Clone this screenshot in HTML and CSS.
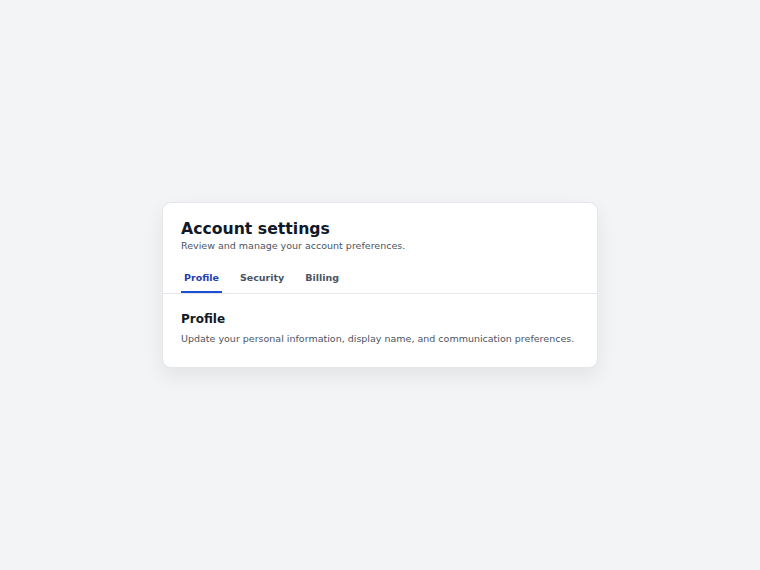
FILE: index.html
```html
<!DOCTYPE html>
<html>
<head>
  <meta charset="UTF-8">
  <title>Account settings</title>
  <link rel="stylesheet" href="styles.css">
</head>
<body>
  <div class="page">
    <div class="card">
      <div class="card-header">
        <h1>Account settings</h1>
        <p class="subtitle">Review and manage your account preferences.</p>
        <nav class="tabs">
          <button class="tab active" type="button">Profile</button>
          <button class="tab" type="button">Security</button>
          <button class="tab" type="button">Billing</button>
        </nav>
      </div>
      <div class="panel">
        <h2>Profile</h2>
        <p>Update your personal information, display name, and communication preferences.</p>
      </div>
    </div>
  </div>
</body>
</html>
```

FILE: styles.css
```css
:root {
  --background: #f3f4f6;
  --text: #111827;
  --muted: #4b5563;
  --primary: #1e40af;
  --border: #e5e7eb;
}

body {
  margin: 0;
  font-family: 'DejaVu Sans', sans-serif;
  background: var(--background);
  color: var(--text);
}

.page {
  min-height: 100vh;
  display: flex;
  align-items: center;
  justify-content: center;
}

.card {
  width: 434px;
  background: white;
  border: 1px solid var(--border);
  border-radius: 9px;
  box-shadow: 0 8px 20px rgba(0, 0, 0, 0.07);
}

.card-header {
  padding: 16px 18px 0;
  border-bottom: 1px solid var(--border);
}

h1 {
  margin: 0;
  font-size: 15.7px;
  line-height: 20px;
}

.subtitle {
  margin: 0;
  font-size: 9.5px;
  line-height: 14px;
  color: var(--muted);
}

.tabs {
  display: flex;
  gap: 15px;
  margin-top: 15px;
}

.tab {
  padding: 4px 3px 7px;
  border: none;
  border-bottom: 2px solid transparent;
  background: none;
  font-family: inherit;
  font-size: 9.5px;
  line-height: 12px;
  font-weight: bold;
  color: var(--muted);
  cursor: pointer;
}

.tab.active {
  color: var(--primary);
  border-bottom-color: #1d4ed8;
}

.panel {
  padding: 17px 18px 21px;
}

h2 {
  margin: 0 0 5px;
  font-size: 12px;
  line-height: 16px;
}

.panel p {
  margin: 0;
  font-size: 9.5px;
  line-height: 14px;
  color: var(--muted);
}
```
